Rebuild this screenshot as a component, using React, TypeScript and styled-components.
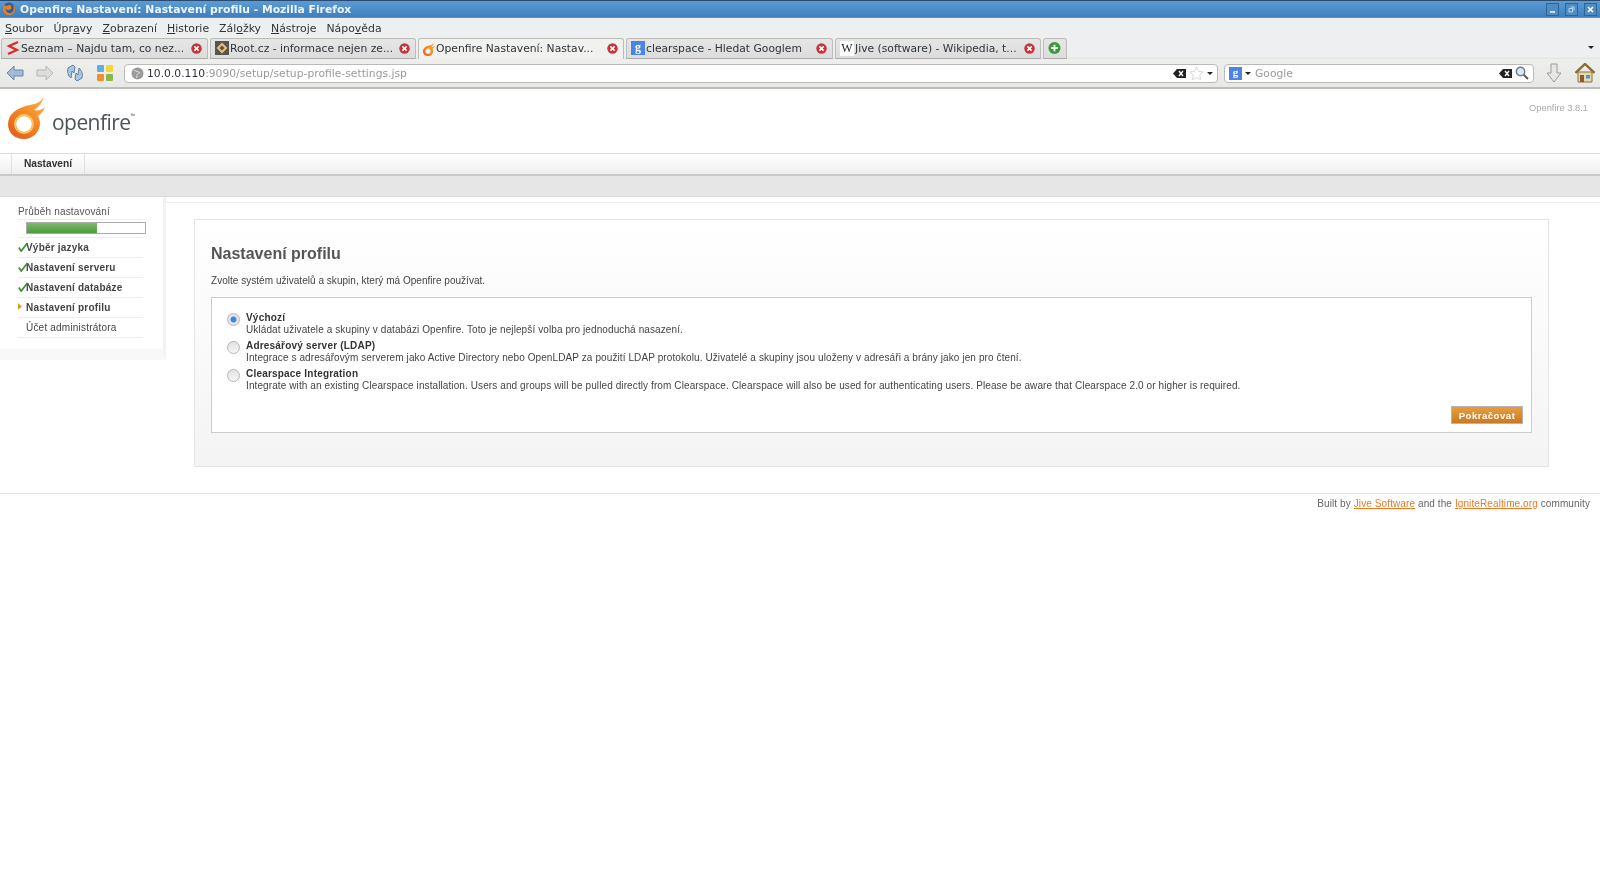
import React from 'react';
import styled, { createGlobalStyle } from 'styled-components';

const Global = createGlobalStyle`
  html, body { margin: 0; padding: 0; background: #fff; }
  body { font-family: "Liberation Sans", Arial, sans-serif; overflow: hidden; }
  #root { width: 1600px; height: 878px; overflow: hidden; }
`;

const Window = styled.div`
  width: 1600px; height: 878px; display: flex; flex-direction: column; background: #fff; filter: blur(0.5px);
`;
const TitleBar = styled.div`
  height: 18px; box-sizing: border-box; border-top: 1px solid #2c4a6c; border-bottom: 1px solid #7d8a96;
  background: linear-gradient(#5b9bd5, #3f80bc);
  display: flex; align-items: center; padding: 0 3px 0 2px; gap: 4px;
`;
const TitleText = styled.span`
  flex: 1; color: #eef4fa; font: bold 10.8px "DejaVu Sans", sans-serif; white-space: nowrap;
`;
const WinButton = styled.span`
  width: 11px; height: 11px; margin-left: 2px; border: 1px solid #2f6496; background: #4f8cc4;
  display: flex; align-items: center; justify-content: center;
`;
const MenuBar = styled.div`
  height: 20px; background: #eeeff1; display: flex; align-items: center; padding-left: 5px; gap: 10px;
`;
const MenuItem = styled.span`
  font: 10.9px "DejaVu Sans", sans-serif; color: #2e3436; white-space: nowrap;
  u { text-underline-offset: 1px; }
`;
const TabStrip = styled.div`
  height: 21px; background: linear-gradient(#eeeff1 0 90%, #dfe0e0); display: flex; align-items: flex-start; padding-left: 1px; gap: 2px; position: relative;
`;
const Tab = styled.div<{ $active?: boolean; $w: number }>`
  width: ${p => p.$w}px; height: 21px; box-sizing: border-box; flex: none;
  border: 1px solid #bdbdb8; border-bottom: ${p => (p.$active ? 'none' : '1px solid #aaa')}; border-radius: 3px 3px 0 0;
  background: ${p => (p.$active ? '#f1f1ef' : 'linear-gradient(#e6e6e6,#dcdcdc)')};
  display: flex; align-items: center; padding: 0 5px 1px 4px; gap: 1px;
`;
const TabLabel = styled.span`
  flex: 1; font: 10.75px "DejaVu Sans", sans-serif; color: #2e3436; white-space: nowrap; overflow: hidden;
`;
const TabMenu = styled.span`
  position: absolute; right: 6px; top: 8px; width: 0; height: 0;
  border-left: 3px solid transparent; border-right: 3px solid transparent; border-top: 3px solid #222;
`;
const NavBar = styled.div`
  height: 30px; box-sizing: border-box; background: linear-gradient(#eeeeec, #e8e8e6); border-bottom: 2px solid #bdbcb8;
  display: flex; align-items: center; padding: 0 6px 0 6px;
`;
const NavIconSlot = styled.span<{ $w: number; $pad?: number }>`
  width: ${p => p.$w}px; padding-left: ${p => p.$pad ?? 0}px; box-sizing: border-box; flex: none; display: flex; align-items: center;
`;
const UrlField = styled.div<{ $w: number }>`
  width: ${p => p.$w}px; height: 19px; box-sizing: border-box; flex: none; border: 1px solid #b9b9b5; border-radius: 4px; background: #fff;
  display: flex; align-items: center; padding: 0 4px; gap: 3px;
`;
const UrlText = styled.span<{ $inset?: number }>`
  flex: 1; margin-left: ${p => p.$inset ?? 0}px; font: 10.75px "DejaVu Sans", sans-serif; color: #9a9a9a; white-space: nowrap;
  b { font-weight: normal; color: #2e3436; }
`;
const Caret = styled.span`
  width: 0; height: 0; border-left: 3px solid transparent; border-right: 3px solid transparent; border-top: 3px solid #222; flex: none;
`;
const GoogleIcon = styled.span<{ $s: number }>`
  width: ${p => p.$s}px; height: ${p => p.$s}px; flex: none; background: #4a84e4; color: #fff; text-align: center;
  font: bold ${p => p.$s - 2}px/${p => p.$s - 2}px "Liberation Serif", serif;
`;
const WikiIcon = styled.span`
  width: 14px; flex: none; background: #fff; color: #222; text-align: center; font: 12px "Liberation Serif", serif;
`;

const PageHeader = styled.div`
  height: 64px; display: flex; justify-content: space-between; padding: 0 12px 0 8px; background: #fff;
`;
const LogoWrap = styled.div`
  display: flex; align-items: flex-start; gap: 6px; padding-top: 6px;
`;
const LogoWord = styled.span`
  font: 500 21px/1 "Open Sans", sans-serif; color: #4b5457; letter-spacing: -0.55px; margin-top: 17px;
  sup { font-size: 6px; vertical-align: 12px; letter-spacing: 0; }
`;
const Version = styled.span`
  font-size: 9.3px; color: #aaa; margin-top: 14px;
`;
const TabBar = styled.div`
  height: 23px; box-sizing: border-box; border-top: 1px solid #dcdcdc; border-bottom: 2px solid #c9c9c9;
  background: linear-gradient(#fff, #efefef); padding-left: 11px; display: flex;
`;
const TopTab = styled.div`
  width: 74px; box-sizing: border-box; border-left: 1px solid #e0e0e0; border-right: 1px solid #e0e0e0;
  font: bold 10.2px/19px "Liberation Sans", sans-serif; text-align: center; color: #333;
`;
const SubBar = styled.div`
  height: 20px; background: #e6e6e6; border-bottom: 1px solid #dadada;
`;
const Body = styled.div`
  display: flex; align-items: flex-start;
`;
const Sidebar = styled.aside`
  width: 166px; flex: none; height: 163px; box-sizing: border-box; padding: 8px 20px 0 18px;
  background: #fff; border-right: 3px solid #f2f2f2; border-bottom: 11px solid #f8f8f8;
`;
const SideHead = styled.div`
  font-size: 10px; line-height: 13px; letter-spacing: 0.17px; color: #555; border-bottom: 1px solid #eee; padding-bottom: 1px;
`;
const ProgressRow = styled.div`
  height: 18px; box-sizing: border-box; border-bottom: 1px solid #eee; padding: 2px 0 0 8px;
`;
const Progress = styled.div`
  width: 120px; height: 12px; box-sizing: border-box; border: 1px solid #aaa; background: #fff;
`;
const ProgressFill = styled.div<{ $pct: number }>`
  height: 100%; width: ${p => p.$pct}%; background: linear-gradient(#7cbb6a, #4d9a3f);
`;
const Step = styled.div<{ $bold?: boolean }>`
  position: relative; height: 20px; box-sizing: border-box; border-bottom: 1px solid #eee; padding-left: 8px;
  font: ${p => (p.$bold ? 'bold' : 'normal')} 10px/19px "Liberation Sans", sans-serif; letter-spacing: 0.2px; color: #444;
  white-space: nowrap;
`;
const StepMark = styled.span`
  position: absolute; left: 0; top: 4px; display: flex;
`;
const Main = styled.main`
  flex: 1; margin-top: 5px; border-top: 1px solid #efefef; padding: 16px 51px 0 28px;
`;
const Card = styled.section`
  height: 248px; box-sizing: border-box; border: 1px solid #e4e4e4; background: linear-gradient(#fff, #f4f4f4); padding: 24px 16px 0 16px;
`;
const Title = styled.h1`
  margin: 0; font: bold 16px/20px "Liberation Sans", sans-serif; color: #555;
`;
const Lead = styled.p`
  margin: 11px 0 10px; font-size: 10px; line-height: 12px; color: #444; letter-spacing: 0.03px;
`;
const Options = styled.div`
  height: 136px; box-sizing: border-box; border: 1px solid #ccc; background: #fff; padding: 13.5px 9px 0 15px; display: flex; flex-direction: column; position: relative;
`;
const Option = styled.div`
  display: flex; height: 28px; gap: 6px;
`;
const Radio = styled.span<{ $on?: boolean }>`
  width: 11px; height: 11px; margin-top: 1px; flex: none; border-radius: 50%; border: 1px solid #b5b5b5;
  background: ${p => (p.$on ? 'radial-gradient(circle, #3f86dc 0 2.6px, #e6e6e6 3.4px)' : 'linear-gradient(#e2e2e2,#f6f6f6)')};
`;
const OptionText = styled.div`
  font-size: 10px; line-height: 12px; letter-spacing: 0.1px; color: #444; white-space: nowrap;
  strong { display: block; color: #333; letter-spacing: 0.2px; }
`;
const Actions = styled.div`
  position: absolute; right: 8px; bottom: 8px;
`;
const Continue = styled.button`
  width: 72px; height: 18px; padding: 0; border: 1px solid #b5b5b5; background: linear-gradient(#e99d3f, #c97a22);
  color: #fff; font: bold 9.6px "Liberation Sans", sans-serif; letter-spacing: 0.5px;
`;
const Footer = styled.footer`
  margin-top: 26px; border-top: 1px solid #e4e4e4; padding: 4px 10px 0 0; text-align: right; font-size: 10px; line-height: 12px; color: #666; letter-spacing: 0.1px;
  a { color: #e87a22; }
`;

const Close = () => (
  <svg width="11" height="11" viewBox="0 0 11 11"><circle cx="5.5" cy="5.5" r="5.2" fill="#c4343a" />
    <path d="M3.4 3.4l4.2 4.2M7.6 3.4l-4.2 4.2" stroke="#fff" strokeWidth="1.6" /></svg>
);
const Flame = ({ h = 14 }: { h?: number }) => (
  <svg width={(h * 38) / 44} height={h} viewBox="0 0 38 44" style={{ flex: 'none' }}>
    <defs>
      <linearGradient id="fl" x1="0.1" y1="1" x2="0.9" y2="0"><stop offset="0" stopColor="#e35a1b" /><stop offset="0.55" stopColor="#f58a28" /><stop offset="1" stopColor="#fbb74a" /></linearGradient>
    </defs>
    <path fillRule="evenodd" fill="url(#fl)" d="M36 0C34 7 28 9 22 10 10 12 0 19 0 29c0 9 7 15 16 15s16-7 16-16c0-3-1-5-2-7 3-2 6-5 7-9-3 3-7 4-11 3 5-3 9-8 10-15zM16 21a8 8 0 1 1 0 16 8 8 0 0 1 0-16z" />
    <circle cx="16" cy="29" r="9" fill="none" stroke="#fcc35e" strokeWidth="2" />
  </svg>
);
const Check = () => (
  <svg width="10" height="10" viewBox="0 0 10 10"><path d="M0.8 5.5L3.2 9 9.4 1" fill="none" stroke="#4a8f3c" strokeWidth="1.8" /></svg>
);
const Backspace = () => (
  <svg width="13" height="9" viewBox="0 0 13 9"><path d="M4 0h9v9H4L0 4.5z" fill="#222" /><path d="M6 2l4 5M10 2L6 7" stroke="#fff" strokeWidth="1.3" /></svg>
);

const tabs = [
  { w: 207, label: 'Seznam – Najdu tam, co nez...', icon: <svg width="14" height="14" viewBox="0 0 14 14"><path d="M12 1L3 5l8 4-9 4" fill="none" stroke="#d92a2a" strokeWidth="2.2" /></svg> },
  { w: 206, label: 'Root.cz - informace nejen ze...', icon: <svg width="14" height="14" viewBox="0 0 14 14"><rect width="14" height="14" fill="#555" /><path d="M7 3l4 4-4 4-4-4z" fill="none" stroke="#f0c070" strokeWidth="2" /></svg> },
  { w: 206, label: 'Openfire Nastavení: Nastav...', active: true, icon: <Flame /> },
  { w: 207, label: 'clearspace - Hledat Googlem', icon: <GoogleIcon $s={14}>g</GoogleIcon> },
  { w: 206, label: 'Jive (software) - Wikipedia, t...', icon: <WikiIcon>W</WikiIcon> },
];

export default function App() {
  return (
    <Window>
      <Global />
      <TitleBar>
        <svg width="14" height="14" viewBox="0 0 14 14"><circle cx="7" cy="7" r="6.5" fill="#2f5f9e" /><path d="M7 .6a6.4 6.4 0 1 1-6.4 6.4c0-2 1-3.4 2-4.4 0 2 2 1.4 4.4.4 2 0 3 2 2 4-2 2-5 1-5-1-1 3 2 6 5 5 3-1 4-7 1-10z" fill="#e8801f" /></svg>
        <TitleText>Openfire Nastavení: Nastavení profilu - Mozilla Firefox</TitleText>
        <WinButton><svg width="7" height="7" viewBox="0 0 7 7"><path d="M1 6h5" stroke="#fff" strokeWidth="1.4" /></svg></WinButton>
        <WinButton><svg width="7" height="7" viewBox="0 0 7 7"><path d="M1 2.5h3.5V6H1zM2.5 1H6v3.5" fill="none" stroke="#bcd4ea" /></svg></WinButton>
        <WinButton><svg width="7" height="7" viewBox="0 0 7 7"><path d="M1 1l5 5M6 1L1 6" stroke="#fff" strokeWidth="1.6" /></svg></WinButton>
      </TitleBar>
      <MenuBar>
        <MenuItem><u>S</u>oubor</MenuItem>
        <MenuItem>Úpr<u>a</u>vy</MenuItem>
        <MenuItem><u>Z</u>obrazení</MenuItem>
        <MenuItem><u>H</u>istorie</MenuItem>
        <MenuItem>Zál<u>o</u>žky</MenuItem>
        <MenuItem><u>N</u>ástroje</MenuItem>
        <MenuItem>Nápo<u>v</u>ěda</MenuItem>
      </MenuBar>
      <TabStrip>
        {tabs.map(t => (
          <Tab key={t.label} $w={t.w} $active={t.active}>
            {t.icon}
            <TabLabel>{t.label}</TabLabel>
            <Close />
          </Tab>
        ))}
        <Tab $w={24}>
          <svg width="14" height="14" viewBox="0 0 14 14"><circle cx="7" cy="7" r="6.5" fill="#3c9a3c" /><path d="M7 3.5v7M3.5 7h7" stroke="#fff" strokeWidth="2" /></svg>
        </Tab>
        <TabMenu />
      </TabStrip>
      <NavBar>
        <NavIconSlot $w={30}><svg width="18" height="16" viewBox="0 0 18 16"><path d="M8 1L1 8l7 7v-4h9V5H8z" fill="#a3bbd6" stroke="#6b86a6" /></svg></NavIconSlot>
        <NavIconSlot $w={30}><svg width="18" height="16" viewBox="0 0 18 16"><path d="M10 1l7 7-7 7v-4H1V5h9z" fill="#dcdedc" stroke="#b6b8b6" /></svg></NavIconSlot>
        <NavIconSlot $w={31}><svg width="18" height="18" viewBox="0 0 18 18"><path d="M2 4l5-3 2 2-1 6-2-2-1 7C2 12 1 8 2 4zM16 14l-5 3-2-2 1-6 2 2 1-7c3 3 4 6 3 10z" fill="#a9c6e2" stroke="#5f7fa6" /></svg></NavIconSlot>
        <NavIconSlot $w={27}><svg width="16" height="16" viewBox="0 0 16 16"><rect width="7" height="7" rx="1" fill="#5db0e6" /><rect x="9" width="7" height="7" rx="1" fill="#f7d634" /><rect y="9" width="7" height="7" rx="1" fill="#f28f2c" /><rect x="9" y="9" width="7" height="7" rx="1" fill="#8ab84c" /></svg></NavIconSlot>
        <UrlField $w={1094}>
          <svg width="13" height="13" viewBox="0 0 13 13" style={{ marginLeft: 2 }}><circle cx="6.5" cy="6.5" r="6" fill="#9a9a9a" /><path d="M3 3c2 2 5 1 6 3-2 0-4 1-3 5" stroke="#e2e2e2" fill="none" /></svg>
          <UrlText><b>10.0.0.110</b>:9090/setup/setup-profile-settings.jsp</UrlText>
          <Backspace />
          <svg width="15" height="15" viewBox="0 0 15 15"><path d="M7.5 1l2 4.4 4.7.5-3.5 3.2 1 4.7-4.2-2.4-4.2 2.4 1-4.7L.8 5.9l4.7-.5z" fill="#fff" stroke="#d8d8d8" /></svg>
          <Caret />
        </UrlField>
        <NavIconSlot $w={6} />
        <UrlField $w={310}>
          <GoogleIcon $s={13}>g</GoogleIcon>
          <Caret />
          <UrlText $inset={1}>Google</UrlText>
          <Backspace />
          <svg width="14" height="14" viewBox="0 0 14 14"><circle cx="5.5" cy="5.5" r="4.2" fill="#dbe6f0" stroke="#6a7a88" strokeWidth="1.4" /><path d="M8.6 8.6L13 13" stroke="#555" strokeWidth="2" /></svg>
        </UrlField>
        <NavIconSlot $w={41} $pad={12}><svg width="16" height="20" viewBox="0 0 16 20"><path d="M5 1h6v9h4l-7 9-7-9h4z" fill="#e7e8e4" stroke="#9a9c98" /></svg></NavIconSlot>
        <NavIconSlot $w={20}><svg width="20" height="20" viewBox="0 0 20 20"><path d="M3 9h14v10H3z" fill="#e8d9a8" stroke="#8a7440" /><path d="M0.5 10L10 1l9.5 9" fill="none" stroke="#8a6a30" strokeWidth="2.4" /><rect x="5" y="12" width="4" height="7" fill="#8a5a30" /><rect x="11" y="12" width="4" height="3.5" fill="#5a90c8" /></svg></NavIconSlot>
      </NavBar>
      <PageHeader>
        <LogoWrap>
          <Flame h={44} />
          <LogoWord>openfire<sup>™</sup></LogoWord>
        </LogoWrap>
        <Version>Openfire 3.8.1</Version>
      </PageHeader>
      <TabBar><TopTab>Nastavení</TopTab></TabBar>
      <SubBar />
      <Body>
        <Sidebar>
          <SideHead>Průběh nastavování</SideHead>
          <ProgressRow><Progress><ProgressFill $pct={59} /></Progress></ProgressRow>
          <Step $bold><StepMark><Check /></StepMark>Výběr jazyka</Step>
          <Step $bold><StepMark><Check /></StepMark>Nastavení serveru</Step>
          <Step $bold><StepMark><Check /></StepMark>Nastavení databáze</Step>
          <Step $bold><StepMark><svg width="5" height="9" viewBox="0 0 5 9"><path d="M0 1l4 3.5L0 8z" fill="#d9a020" /></svg></StepMark>Nastavení profilu</Step>
          <Step>Účet administrátora</Step>
        </Sidebar>
        <Main>
          <Card>
            <Title>Nastavení profilu</Title>
            <Lead>Zvolte systém uživatelů a skupin, který má Openfire používat.</Lead>
            <Options>
              <Option>
                <Radio $on />
                <OptionText><strong>Výchozí</strong>Ukládat uživatele a skupiny v databázi Openfire. Toto je nejlepší volba pro jednoduchá nasazení.</OptionText>
              </Option>
              <Option>
                <Radio />
                <OptionText><strong>Adresářový server (LDAP)</strong>Integrace s adresářovým serverem jako Active Directory nebo OpenLDAP za použití LDAP protokolu. Uživatelé a skupiny jsou uloženy v adresáři a brány jako jen pro čtení.</OptionText>
              </Option>
              <Option>
                <Radio />
                <OptionText><strong>Clearspace Integration</strong>Integrate with an existing Clearspace installation. Users and groups will be pulled directly from Clearspace. Clearspace will also be used for authenticating users. Please be aware that Clearspace 2.0 or higher is required.</OptionText>
              </Option>
              <Actions><Continue>Pokračovat</Continue></Actions>
            </Options>
          </Card>
        </Main>
      </Body>
      <Footer>Built by <a href="#a">Jive Software</a> and the <a href="#b">IgniteRealtime.org</a> community</Footer>
    </Window>
  );
}
